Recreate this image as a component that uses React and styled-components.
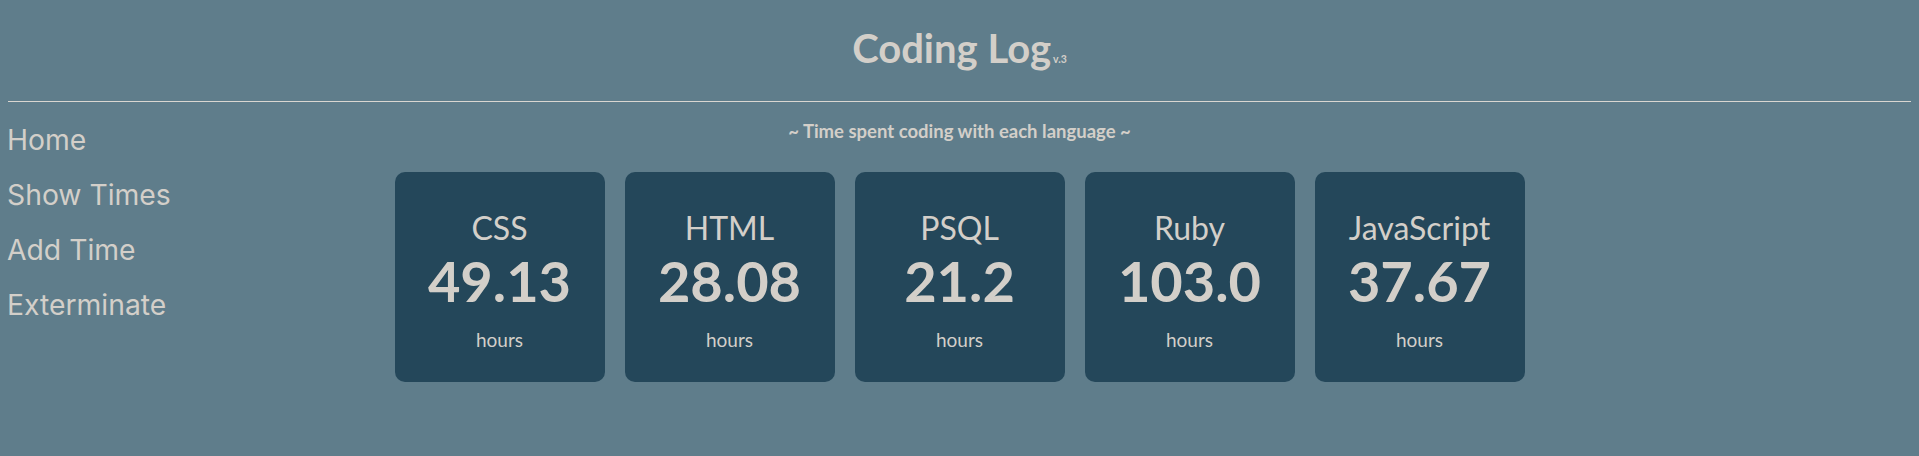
import React from "react";
import styled, { createGlobalStyle } from "styled-components";

const GlobalStyle = createGlobalStyle`
  html, body {
    margin: 0;
    padding: 0;
    background: #5f7d8b;
  }
  body {
    padding: 8px;
    font-family: Lato, "Noto Sans", sans-serif;
    color: #d3cfc9;
  }
`;

const Header = styled.header`
  display: flex;
  justify-content: center;
  padding-top: 16px;
  padding-bottom: 29px;
`;

const Title = styled.h1`
  margin: 0;
  font-family: Lato, sans-serif;
  font-weight: 700;
  font-size: 40px;
  line-height: 48px;
  color: #d3cfc9;
`;

const Version = styled.span`
  font-size: 10.5px;
  line-height: 1;
  font-weight: 700;
  margin-left: 2px;
`;

const Rule = styled.hr`
  margin: 0;
  border: none;
  border-top: 1px solid #d9d6d1;
  height: 0;
`;

const Body = styled.div`
  display: grid;
  grid-template-columns: 1fr auto 1fr;
`;

const Nav = styled.nav`
  display: flex;
  flex-direction: column;
  padding-top: 11px;
  margin-left: -1px;
`;

const NavLink = styled.a`
  font-family: Inter, "Noto Sans", sans-serif;
  font-size: 28.3px;
  line-height: 55px;
  color: #d3cfc9;
  text-decoration: none;
`;

const Main = styled.main`
  display: flex;
  flex-direction: column;
  align-items: center;
`;

const Subtitle = styled.p`
  margin: 19px 0 31px;
  font-family: Lato, sans-serif;
  font-weight: 700;
  font-size: 18.5px;
  line-height: 20px;
  color: #d3cfc9;
`;

const Cards = styled.div`
  display: flex;
  gap: 20px;
`;

const Card = styled.div`
  width: 210px;
  height: 210px;
  box-sizing: border-box;
  background: #24475a;
  border-radius: 10px;
  display: flex;
  flex-direction: column;
  align-items: center;
  padding-top: 37px;
`;

const Label = styled.div`
  font-size: 32px;
  line-height: 38px;
  font-weight: 400;
`;

const Value = styled.div`
  margin-top: 6px;
  font-size: 56px;
  line-height: 56px;
  font-weight: 700;
`;

const Unit = styled.div`
  margin-top: 19px;
  font-size: 19px;
  line-height: 23px;
  font-weight: 400;
`;

const languages = [
  { name: "CSS", hours: "49.13" },
  { name: "HTML", hours: "28.08" },
  { name: "PSQL", hours: "21.2" },
  { name: "Ruby", hours: "103.0" },
  { name: "JavaScript", hours: "37.67" },
];

export default function App() {
  return (
    <>
      <GlobalStyle />
      <Header>
        <Title>
          Coding Log<Version>v.3</Version>
        </Title>
      </Header>
      <Rule />
      <Body>
        <Nav>
          <NavLink href="#">Home</NavLink>
          <NavLink href="#">Show Times</NavLink>
          <NavLink href="#">Add Time</NavLink>
          <NavLink href="#">Exterminate</NavLink>
        </Nav>
        <Main>
          <Subtitle>~ Time spent coding with each language ~</Subtitle>
          <Cards>
            {languages.map((l) => (
              <Card key={l.name}>
                <Label>{l.name}</Label>
                <Value>{l.hours}</Value>
                <Unit>hours</Unit>
              </Card>
            ))}
          </Cards>
        </Main>
        <div />
      </Body>
    </>
  );
}
